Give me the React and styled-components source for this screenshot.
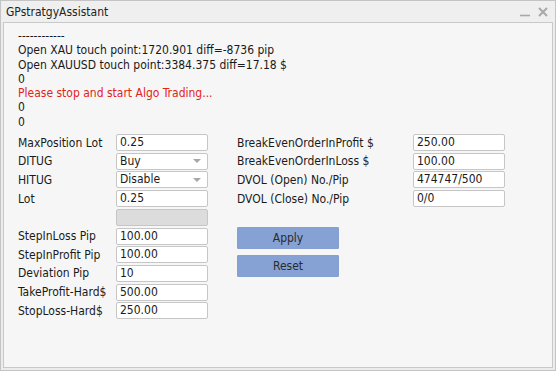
import styled, { createGlobalStyle } from 'styled-components'

const GlobalStyle = createGlobalStyle`
    html, body {
        margin: 0;
        padding: 0;
        background: #ffffff;
    }
    body {
        font-family: "DejaVu Sans Condensed", "DejaVu Sans", sans-serif;
        font-size: 12px;
        color: #1a1a1a;
    }
`

const Window = styled.div`
    width: 556px;
    height: 371px;
    box-sizing: border-box;
    border: 1px solid #c4c4c4;
    background: #ececec;
    display: flex;
    flex-direction: column;
`

const TitleBar = styled.div`
    height: 21px;
    display: flex;
    align-items: center;
    justify-content: space-between;
    padding: 0 6px 0 5px;
    background: #efefef;

    & .title {
        color: #222;
    }

    & .controls {
        display: flex;
        align-items: center;
        gap: 6px;
    }
`

const Body = styled.div`
    flex: 1;
    margin: 0 2px 2px 2px;
    border: 1px solid #c9c9c9;
    background: #f6f6f6;
    padding: 6px 14px 0 14px;
    display: flex;
    flex-direction: column;
`

const LogLine = styled.div`
    height: 14.3px;
    line-height: 14px;
    white-space: nowrap;
    color: ${p => (p.$alert ? '#e2231a' : '#1a1a1a')};
`

const Form = styled.div`
    display: flex;
    margin-top: 5px;
`

const Side = styled.div`
    display: flex;
    flex-direction: column;
    width: ${p => (p.$width ? `${p.$width}px` : 'auto')};
`

const Fields = styled.div`
    display: grid;
    grid-template-columns: ${p => p.$labelWidth}px 92px;
    grid-auto-rows: 17px;
    row-gap: 1.7px;
    align-items: center;
`

const Label = styled.span`
    white-space: nowrap;
`

const Field = styled.div`
    box-sizing: border-box;
    height: 17px;
    border: 1px solid #c6c6c6;
    border-radius: 2px;
    background: ${p => (p.$blank ? '#dcdcdc' : '#ffffff')};
    padding: 0 3px;
    display: flex;
    align-items: center;
    justify-content: space-between;
    line-height: 15px;

    & .arrow {
        width: 0;
        height: 0;
        border-left: 4px solid transparent;
        border-right: 4px solid transparent;
        border-top: 4px solid #a8a8a8;
        margin-right: 3px;
    }
`

const Buttons = styled.div`
    display: flex;
    flex-direction: column;
    gap: 6px;
    margin-top: 20px;
`

const Button = styled.button`
    width: 102px;
    height: 22px;
    border: 1px solid #86a0d0;
    border-radius: 1px;
    background: #86a1d4;
    color: #2b2b2b;
    font-family: inherit;
    font-size: 12px;
    padding: 0;
`

const leftRows = [
    ['MaxPosition Lot', '0.25'],
    ['DITUG', 'Buy', true],
    ['HITUG', 'Disable', true],
    ['Lot', '0.25'],
    [null],
    ['StepInLoss Pip', '100.00'],
    ['StepInProfit Pip', '100.00'],
    ['Deviation Pip', '10'],
    ['TakeProfit-Hard$', '500.00'],
    ['StopLoss-Hard$', '250.00'],
]

const rightRows = [
    ['BreakEvenOrderInProfit $', '250.00'],
    ['BreakEvenOrderInLoss $', '100.00'],
    ['DVOL (Open) No./Pip', '474747/500'],
    ['DVOL (Close) No./Pip', '0/0'],
]

function Row({ label, value, select }) {
    return (
        <>
            <Label>{label}</Label>
            <Field $blank={label === null}>
                <span>{value}</span>
                {select && <i className='arrow'></i>}
            </Field>
        </>
    )
}

export default function App() {
    return (
        <>
            <GlobalStyle />
            <Window>
                <TitleBar>
                    <span className='title'>GPstratgyAssistant</span>
                    <span className='controls'>
                        <svg width="12" height="12" viewBox="0 0 12 12">
                            <path d="M1 9.5h10" stroke="#a8a8a8" strokeWidth="1.6" />
                        </svg>
                        <svg width="12" height="12" viewBox="0 0 12 12">
                            <path d="M2 2l8 8M10 2l-8 8" stroke="#a8a8a8" strokeWidth="2" />
                        </svg>
                    </span>
                </TitleBar>
                <Body>
                    <LogLine>------------</LogLine>
                    <LogLine>Open XAU touch point:1720.901 diff=-8736 pip</LogLine>
                    <LogLine>Open XAUUSD touch point:3384.375 diff=17.18 $</LogLine>
                    <LogLine>0</LogLine>
                    <LogLine $alert>Please stop and start Algo Trading...</LogLine>
                    <LogLine>0</LogLine>
                    <LogLine>0</LogLine>
                    <Form>
                        <Side $width={219}>
                            <Fields $labelWidth={98}>
                                {leftRows.map((r, i) => (
                                    <Row key={i} label={r[0]} value={r[1]} select={r[2]} />
                                ))}
                            </Fields>
                        </Side>
                        <Side>
                            <Fields $labelWidth={176}>
                                {rightRows.map((r, i) => (
                                    <Row key={i} label={r[0]} value={r[1]} />
                                ))}
                            </Fields>
                            <Buttons>
                                <Button>Apply</Button>
                                <Button>Reset</Button>
                            </Buttons>
                        </Side>
                    </Form>
                </Body>
            </Window>
        </>
    )
}
